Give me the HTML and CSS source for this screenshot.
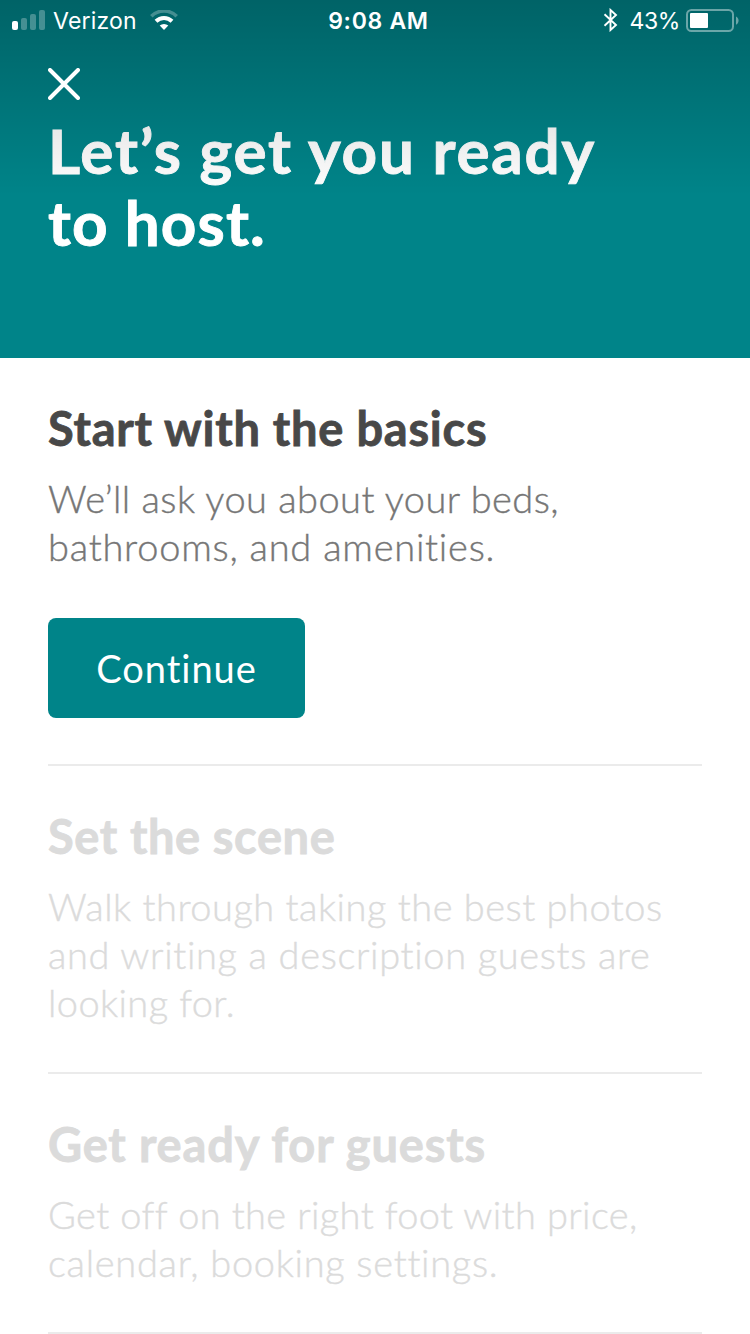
FILE: index.html
```html
<!DOCTYPE html>
<html lang="en">
<head>
<meta charset="utf-8">
<title>Let’s get you ready to host</title>
<link rel="stylesheet" href="styles.css">
</head>
<body>
<header class="hero">
  <div class="status">
    <div class="status-left">
      <svg class="signal" width="34" height="20" viewBox="0 0 34 20" fill="#fff">
        <rect x="0" y="11" width="6" height="9" rx="2"/>
        <g opacity=".27"><rect x="9" y="8" width="6" height="12" rx="2"/><rect x="18" y="4" width="6" height="16" rx="2"/><rect x="27" y="0" width="6" height="20" rx="2"/></g>
      </svg>
      <span class="carrier">Verizon</span>
      <svg class="wifi" width="28" height="20" viewBox="0 0 28 20" fill="none" stroke="#fff">
        <path d="M1.300 6.200a18.200 18.200 0 0 1 25.400 0" stroke-width="3.600" opacity=".27"/>
        <path d="M6 11.300a11.500 11.500 0 0 1 16 0" stroke-width="4"/>
        <path d="M14 20l-4.300-4.400a6.300 6.300 0 0 1 8.600 0z" fill="#fff" stroke="none"/>
      </svg>
    </div>
    <div class="clock">9:08 AM</div>
    <div class="status-right">
      <svg class="bluetooth" width="16" height="24" viewBox="0 0 16 24" fill="none" stroke="#fff" stroke-width="1.9">
        <path d="M1.500 6.300L13 17 7.500 22V2L13 7 1.500 17.700"/>
      </svg>
      <span class="percent">43%</span>
      <svg class="battery" width="54" height="24" viewBox="0 0 54 24">
        <rect x="1" y="1" width="46" height="21" rx="4.500" fill="none" stroke="#fff" stroke-width="2" opacity=".42"/>
        <rect x="4" y="4" width="18" height="15" rx="1" fill="#fff"/>
        <path d="M50 7.500c3.400 1.600 3.400 6.600 0 8.200z" fill="#fff" opacity=".42"/>
      </svg>
    </div>
  </div>
  <svg class="close" width="32" height="32" viewBox="0 0 32 32" fill="none" stroke="#fff" stroke-width="4" stroke-linecap="round"><path d="M2 2l28 28M30 2L2 30"/></svg>
  <h1 class="title"><span class="title-a">Let’s get you ready</span><br><span class="title-b">to host.</span></h1>
</header>
<main class="steps">
  <section class="step">
    <h2 class="h-basics">Start with the basics</h2>
    <p><span class="b1">We’ll ask you about your beds,</span><br><span class="b2">bathrooms, and amenities.</span></p>
    <button class="continue" type="button">Continue</button>
  </section>
  <section class="step upcoming">
    <h2 class="h-scene">Set the scene</h2>
    <p><span class="s1">Walk through taking the best photos</span><br><span class="s2">and writing a description guests are</span><br><span class="s3">looking for.</span></p>
  </section>
  <section class="step upcoming">
    <h2 class="h-guests">Get ready for guests</h2>
    <p><span class="g1">Get off on the right foot with price,</span><br><span class="g2">calendar, booking settings.</span></p>
  </section>
</main>
</body>
</html>
```
FILE: styles.css
```css
* { box-sizing: border-box; }
body { margin: 0; background: #fff; overflow: hidden; font-family: Lato, sans-serif; font-variant-ligatures: none; }
h1, h2, p { margin: 0; white-space: nowrap; }
svg { display: block; flex: none; }

.hero { position: relative; height: 358px; background: #008489; }
.hero::after {
  content: ""; position: absolute; inset: 0 0 auto; height: 196px;
  background: linear-gradient(rgba(0,0,0,.25), rgba(0,0,0,0));
}
.status {
  position: relative; z-index: 1; height: 68px; padding: 0 10px 0 12px;
  display: grid; grid-template-columns: 1fr auto 1fr; align-items: start;
  color: #fff; font: 400 23px/42px Inter, sans-serif;
}
.status-left, .status-right { display: flex; }
.status-right { justify-content: flex-end; }
.signal { margin-top: 10px; }
.carrier { margin-left: 7px; letter-spacing: .2px; }
.wifi { margin: 10px 0 0 13px; }
.clock { padding-left: 5px; font-weight: 600; letter-spacing: .7px; }
.bluetooth { margin: 8px 11px 0 0; }
.percent { margin-right: 6px; letter-spacing: -.4px; }
.battery { margin-top: 9px; }
.close { position: relative; z-index: 1; margin-left: 48px; }
.title {
  padding: 14px 0 0 48px; color: #fff; font-size: 62px; line-height: 72px; font-weight: 700;
  -webkit-text-stroke: .9px;
}

.steps { padding: 0 48px; }
.step { padding: 42px 0 46px; border-bottom: 2px solid #ebebeb; color: #767676; }
.step h2 { font-size: 47px; line-height: 56px; font-weight: 700; color: #484848; -webkit-text-stroke: .8px; }
.step p { margin-top: 18px; font-size: 38px; line-height: 48px; font-weight: 300; -webkit-text-stroke: .4px; }
.step.upcoming, .step.upcoming h2 { color: #dbdbdb; }
.continue {
  display: block; width: 257px; height: 100px; margin-top: 48px; padding: 0;
  border: 0; border-radius: 8px; background: #008489; color: #fff;
  font: 400 38px/100px Lato, sans-serif; letter-spacing: 1px;
}

/* optical tracking */
.title-a { letter-spacing: 1.75px; }
.title-b { letter-spacing: 1.1px; }
.h-basics { letter-spacing: .75px; }
.h-scene { letter-spacing: .6px; }
.h-guests { letter-spacing: .82px; }
.b1 { letter-spacing: .46px; }
.b2 { letter-spacing: .76px; }
.s1 { letter-spacing: .51px; }
.s2 { letter-spacing: .65px; }
.s3 { letter-spacing: .4px; }
.g1 { letter-spacing: .37px; }
.g2 { letter-spacing: .7px; }
```
